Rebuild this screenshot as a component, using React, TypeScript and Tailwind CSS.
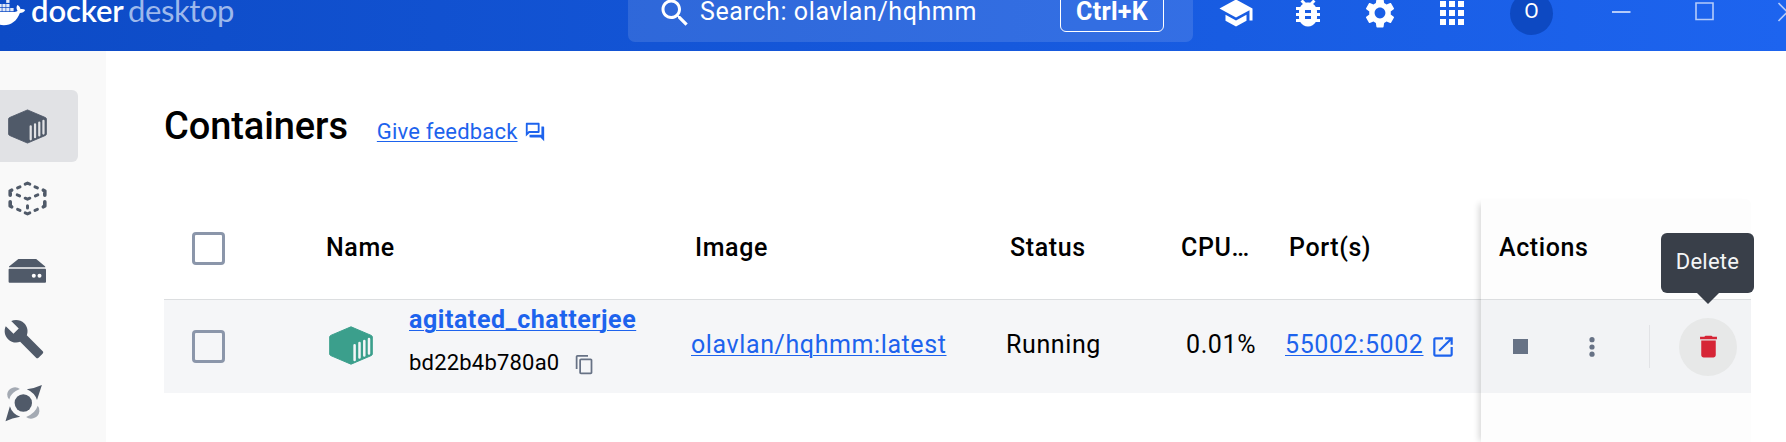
import type { ReactNode } from "react";

type IconProps = { className?: string };

function MdIcon({ d, className }: IconProps & { d: string }) {
  return (
    <svg viewBox="0 0 24 24" fill="currentColor" className={className}>
      <path d={d} />
    </svg>
  );
}

const paths = {
  search:
    "M15.5 14h-.79l-.28-.27C15.41 12.59 16 11.11 16 9.5 16 5.91 13.09 3 9.5 3S3 5.91 3 9.5 5.91 16 9.5 16c1.61 0 3.09-.59 4.23-1.57l.27.28v.79l5 4.99L20.49 19l-4.99-5zm-6 0C7.01 14 5 11.99 5 9.5S7.01 5 9.5 5 14 7.01 14 9.5 11.99 14 9.5 14z",
  school: "M5 13.18v4L12 21l7-3.82v-4L12 17l-7-3.82zM12 3 1 9l11 6 9-4.91V17h2V9L12 3z",
  bug: "M20 8h-2.81c-.45-.78-1.07-1.45-1.82-1.96L17 4.41 15.59 3l-2.17 2.17C12.96 5.06 12.49 5 12 5c-.49 0-.96.06-1.41.17L8.41 3 7 4.41l1.62 1.63C7.88 6.55 7.26 7.22 6.81 8H4v2h2.09c-.05.33-.09.66-.09 1v1H4v2h2v1c0 .34.04.67.09 1H4v2h2.81c1.04 1.79 2.97 3 5.19 3s4.15-1.21 5.19-3H20v-2h-2.09c.05-.33.09-.66.09-1v-1h2v-2h-2v-1c0-.34-.04-.67-.09-1H20V8zm-6 8h-4v-2h4v2zm0-4h-4v-2h4v2z",
  gear: "M19.14 12.94c.04-.3.06-.61.06-.94 0-.32-.02-.64-.07-.94l2.03-1.58c.18-.14.23-.41.12-.61l-1.92-3.32c-.12-.22-.37-.29-.59-.22l-2.39.96c-.5-.38-1.03-.7-1.62-.94l-.36-2.54c-.04-.24-.24-.41-.48-.41h-3.84c-.24 0-.43.17-.47.41l-.36 2.54c-.59.24-1.13.57-1.62.94l-2.39-.96c-.22-.08-.47 0-.59.22L2.74 8.87c-.12.21-.08.47.12.61l2.03 1.58c-.05.3-.09.63-.09.94s.02.64.07.94l-2.03 1.58c-.18.14-.23.41-.12.61l1.92 3.32c.12.22.37.29.59.22l2.39-.96c.5.38 1.03.7 1.62.94l.36 2.54c.05.24.24.41.48.41h3.84c.24 0 .44-.17.47-.41l.36-2.54c.59-.24 1.13-.56 1.62-.94l2.39.96c.22.08.47 0 .59-.22l1.92-3.32c.12-.22.07-.47-.12-.61l-2.01-1.58zM12 15.6c-1.98 0-3.6-1.62-3.6-3.6s1.62-3.6 3.6-3.6 3.6 1.62 3.6 3.6-1.62 3.6-3.6 3.6z",
  apps: "M4 8h4V4H4v4zm6 12h4v-4h-4v4zm-6 0h4v-4H4v4zm0-6h4v-4H4v4zm6 0h4v-4h-4v4zm6-10v4h4V4h-4zm-6 4h4V4h-4v4zm6 6h4v-4h-4v4zm0 6h4v-4h-4v4z",
  feedback:
    "M15 4v7H5.17l-.59.59-.58.58V4h11m1-2H3c-.55 0-1 .45-1 1v14l4-4h10c.55 0 1-.45 1-1V3c0-.55-.45-1-1-1zm5 4h-2v9H6v2c0 .55.45 1 1 1h11l4 4V7c0-.55-.45-1-1-1z",
  copy: "M16 1H4c-1.1 0-2 .9-2 2v14h2V3h12V1zm3 4H8c-1.1 0-2 .9-2 2v14c0 1.1.9 2 2 2h11c1.1 0 2-.9 2-2V7c0-1.1-.9-2-2-2zm0 16H8V7h11v14z",
  open: "M19 19H5V5h7V3H5c-1.11 0-2 .9-2 2v14c0 1.1.89 2 2 2h14c1.1 0 2-.9 2-2v-7h-2v7zM14 3v2h3.59l-9.83 9.83 1.41 1.41L19 6.41V10h2V3h-7z",
  trash: "M6 19c0 1.1.9 2 2 2h8c1.1 0 2-.9 2-2V7H6v12zM19 4h-3.5l-1-1h-5l-1 1H5v2h14V4z",
  wrench:
    "m22.7 19-9.1-9.1c.9-2.3.4-5-1.5-6.9-2-2-5-2.4-7.4-1.3L9 6 6 9 1.6 4.7C.4 7.1.9 10.1 2.9 12.1c1.9 1.9 4.6 2.4 6.9 1.5l9.1 9.1c.4.4 1 .4 1.4 0l2.3-2.3c.5-.4.5-1.1.1-1.4z",
};

function Whale() {
  return (
    <svg viewBox="0 0 26 38" className="h-[38px] w-[26px] shrink-0" fill="#fff">
      <path d="M0 17.9H14.6C16 17.9 17 17.5 17.5 16.800C16.200 15 16.300 12.700 17.400 11C19.200 12 20.300 13.500 20.500 15.200C22.200 14.900 24 15.200 25.200 16C24.300 18 22.400 18.900 19.900 19C16.900 27 11.200 31.200 3.800 31.200C2.200 31.200 1 31 0 30.700Z" />
      <g fillOpacity=".88">
        <path d="M6.200 5H9.500V8.900H6.200Z" />
        <path d="M0 9.900H1.700V13.200H0ZM2.400 9.900H5.600V13.200H2.400ZM6.200 9.900H9.500V13.200H6.200Z" />
        <path d="M0 13.900H1.700V17.200H0ZM2.400 13.900H5.600V17.200H2.400ZM6.200 13.900H9.500V17.200H6.200ZM10.200 13.900H13.600V17.200H10.200Z" />
      </g>
    </svg>
  );
}

function ContainerIcon({ className, stripe }: IconProps & { stripe: string }) {
  return (
    <svg viewBox="0 0 44 39" className={className}>
      <path
        d="M22 .8 42.2 9.4Q43.3 9.9 43.3 11V28Q43.3 29.1 42.2 29.6L22 38.2 1.8 29.6Q.7 29.1 .7 28V11Q.7 9.9 1.8 9.4Z"
        fill="currentColor"
        stroke="currentColor"
        strokeLinejoin="round"
      />
      <path
        d="M25.6 19.2V34M30.5 17V31.6M35.3 15V29.6M40 13V27.5"
        stroke={stripe}
        strokeWidth="2.5"
        strokeLinecap="round"
      />
    </svg>
  );
}

function ImagesIcon() {
  return (
    <svg
      viewBox="0 0 39 35"
      className="h-[35px] w-[39px]"
      fill="none"
      stroke="currentColor"
      strokeWidth="3"
      strokeLinecap="round"
      strokeLinejoin="round"
    >
      <path
        strokeWidth="3.6"
        d="M2.2 10V14.2M2.2 10 3.6 9.2M36.8 10V14.2M36.8 10 35.4 9.2M2.2 20.8V25L3.6 25.8M36.8 20.8V25L35.4 25.8"
      />
      <path d="M17.2 3.1 19.5 2.1 21.8 3.1M17.2 31.9 19.5 32.9 21.8 31.9M17.2 17.2 19.5 18.2 21.8 17.2" />
      <path d="M9.6 6.9 12 5.8M29.4 6.9 27 5.8M9.6 28.4 12 29.4M29.4 28.4 27 29.4M9.2 13.9 11.6 14.9M29.8 13.9 27.4 14.9M19.5 24.8V27" />
    </svg>
  );
}

function VolumesIcon() {
  return (
    <svg viewBox="0 0 39 26" className="h-[26px] w-[39px]" fill="currentColor">
      <path d="M10.4 1H28.2L37.2 8.4V9.3H1V8.4Z" />
      <path d="M1.5 10.8H37.1Q38 10.8 38 11.7V23.8Q38 24.8 37 24.8H1.6Q.6 24.8 .6 23.8V11.7Q.6 10.8 1.5 10.8Z" />
      <circle cx="25.8" cy="17.8" r="2" fill="#fff" />
      <circle cx="31.5" cy="17.8" r="2" fill="#fff" />
    </svg>
  );
}

function ScoutIcon() {
  return (
    <svg viewBox="0 0 38 38" className="h-[38px] w-[38px]" fill="currentColor">
      <path
        fill="#a4aab3"
        d="M14.9 5.1Q11.4 2.2 7 3.9Q2.6 5.8 2.2 10.3Q2 13 4.2 15.5Q5.6 8.6 14.9 5.1ZM21.1 32.9Q24.6 35.8 29 34.1Q33.8 32.2 34.4 27.2Q34.5 23.6 32.7 21.8Q30.4 29.4 21.1 32.9Z"
      />
      <path d="M36.9 1 32 16.1Q30 8.8 21.8 5.2Q30.6 4 36.9 1ZM.5 37.2 4.9 22.2Q7 29.6 15.2 32.8Q7 34.2 .5 37.2Z" />
      <circle cx="18.3" cy="19" r="8.7" />
    </svg>
  );
}

function NavItem({ children, active = false }: { children: ReactNode; active?: boolean }) {
  return (
    <div
      className={
        active
          ? "flex h-[72px] w-[78px] items-center rounded-r-[6px] bg-[#e1e2e5]"
          : "flex h-[72px] w-[78px] items-center"
      }
    >
      {children}
    </div>
  );
}

function Checkbox() {
  return <div className="h-[33px] w-[33px] rounded-[4px] border-[3.5px] border-[#8b96aa]" />;
}

function Header() {
  return (
    <header className="h-[51px] shrink-0 overflow-hidden bg-linear-to-r from-[#0d4bc6] to-[#1d64ef] text-white">
      <div className="flex h-[26px] items-center">
        <div className="flex w-[628px] shrink-0 items-center">
          <Whale />
          <div className="mt-[-7px] ml-[5px] flex items-baseline font-['Lato'] text-[31px] leading-[40px]">
            <span className="w-[97px] font-semibold tracking-[-0.1px]">docker</span>
            <span className="tracking-[-0.4px] text-[#9db8ec]">desktop</span>
          </div>
        </div>
        <div className="flex h-[58px] w-[565px] shrink-0 items-center rounded-[7px] bg-white/12 pl-7">
          <MdIcon d={paths.search} className="ml-px h-9 w-9" />
          <span className="mt-[-2px] ml-[7px] w-[360px] text-[25px] leading-7 tracking-[0.6px]">
            Search: olavlan/hqhmm
          </span>
          <span className="flex h-[38px] w-[104px] items-center justify-center rounded-[6px] border border-white pb-[2px] text-[25px] font-bold tracking-[0.3px]">
            Ctrl+K
          </span>
        </div>
        <div className="ml-[25px] flex w-[270px] shrink-0 items-center gap-9">
          <MdIcon d={paths.school} className="h-9 w-9" />
          <MdIcon d={paths.bug} className="h-9 w-9" />
          <MdIcon d={paths.gear} className="h-9 w-9" />
          <MdIcon d={paths.apps} className="h-9 w-9" />
        </div>
        <div className="ml-[22px] flex h-[43px] w-[43px] shrink-0 items-center justify-center rounded-full bg-[#0d49c2] pb-[3px] text-[21px]">
          O
        </div>
        <svg
          viewBox="0 0 176 26"
          className="ml-[57px] h-[26px] w-[176px] shrink-0"
          fill="none"
          stroke="#b4cbfa"
          strokeWidth="1.6"
        >
          <path d="M2 12H20.5" strokeWidth="2" />
          <path d="M86 3H103V19.5H86Z" />
          <path d="M168.5 3 186 21M168.5 21 186 3" />
        </svg>
      </div>
    </header>
  );
}

function Sidebar() {
  return (
    <nav className="w-[106px] shrink-0 bg-[#f9f9f9] pt-[39px] text-[#505a69]">
      <NavItem active>
        <ContainerIcon className="ml-[8px] h-[35px] w-[39px]" stripe="#e1e2e5" />
      </NavItem>
      <NavItem>
        <div className="ml-[8px]">
          <ImagesIcon />
        </div>
      </NavItem>
      <NavItem>
        <div className="mt-[2px] ml-[7.5px]">
          <VolumesIcon />
        </div>
      </NavItem>
      <NavItem>
        <MdIcon d={paths.wrench} className="mt-[-7px] ml-[3px] h-[42px] w-[42px]" />
      </NavItem>
      <NavItem>
        <div className="mt-[-22px] ml-[5px]">
          <ScoutIcon />
        </div>
      </NavItem>
    </nav>
  );
}

function ContainerTable() {
  return (
    <section className="flex h-[243px] w-[1587px] text-[25px] tracking-[0.6px]">
      <div className="w-[1317px]">
        <div className="grid h-[101px] grid-cols-[162px_369px_315px_171px_108px_192px] items-center border-b border-[#dcdee0] pb-[2px] font-medium">
          <div className="pl-7">
            <Checkbox />
          </div>
          <div>Name</div>
          <div>Image</div>
          <div>Status</div>
          <div>CPU…</div>
          <div>Port(s)</div>
        </div>
        <div className="grid h-[93px] grid-cols-[165px_80px_282px_315px_180px_99px_196px] items-center bg-[#f5f6f8]">
          <div className="pl-7">
            <Checkbox />
          </div>
          <ContainerIcon className="mt-[-2px] h-[39px] w-[44px] text-[#3b9f8c]" stripe="#f5f6f8" />
          <div className="mt-[-12px]">
            <a className="block leading-[44px] font-bold tracking-[0.55px] text-[#1d63ed] underline decoration-1 underline-offset-2">
              agitated_chatterjee
            </a>
            <div className="flex items-center text-[22px] leading-[42px] tracking-[0.2px]">
              bd22b4b780a0
              <MdIcon d={paths.copy} className="mt-[3px] ml-[15px] h-[21px] w-[21px] text-[#677285]" />
            </div>
          </div>
          <a className="mt-[-3px] text-[#1d63ed] underline decoration-1 underline-offset-2">olavlan/hqhmm:latest</a>
          <div className="mt-[-3px]">Running</div>
          <div className="mt-[-3px]">0.01%</div>
          <div className="mt-[-3px] flex items-center text-[#1d63ed]">
            <a className="underline decoration-1 underline-offset-2">55002:5002</a>
            <MdIcon d={paths.open} className="mt-[3px] ml-[6px] h-[26px] w-[26px]" />
          </div>
        </div>
      </div>
      <div className="w-[270px] rounded-tr-[6px] bg-[#fdfdfd] shadow-[-5px_2px_6px_-3px_rgba(0,0,0,0.16)]">
        <div className="relative flex h-[101px] items-center border-b border-[#dcdee0] pb-[2px] pl-[18px] font-medium">
          Actions
          <div className="absolute top-[34px] left-[180px] flex h-[60px] w-[93px] items-center justify-center rounded-[6px] bg-[#393f49] pb-[4px] text-[22px] font-normal tracking-[0.25px] text-[#f4f5f6]">
            Delete
            <svg viewBox="0 0 22 11" className="absolute top-full left-[36px] h-[11px] w-[22px]" fill="#393f49">
              <path d="M0 0H22L11 11Z" />
            </svg>
          </div>
        </div>
        <div className="flex h-[93px] items-center bg-[#f2f3f5]">
          <div className="ml-8 h-[15px] w-[15px] bg-[#677285]" />
          <svg viewBox="0 0 6 20" className="ml-[61px] h-5 w-[6px]" fill="#677285">
            <circle cx="3" cy="2.7" r="2.6" />
            <circle cx="3" cy="10" r="2.6" />
            <circle cx="3" cy="17.2" r="2.6" />
          </svg>
          <div className="ml-[54px] h-[43px] w-px bg-[#e2e3e6]" />
          <div className="ml-[29px] flex h-[58px] w-[58px] items-center justify-center rounded-full bg-[#e7e8e8]">
            <MdIcon d={paths.trash} className="h-[29px] w-[29px] text-[#d62536]" />
          </div>
        </div>
      </div>
    </section>
  );
}

export default function App() {
  return (
    <div className="flex h-[442px] w-[1786px] flex-col overflow-hidden bg-white font-['Roboto',sans-serif] whitespace-nowrap text-black">
      <Header />
      <div className="flex h-[391px]">
        <Sidebar />
        <main className="w-[1680px] pl-[58px]">
          <div className="flex h-[148px] items-baseline pt-[50px]">
            <h1 className="text-[38px] leading-[50px] font-medium tracking-[-0.1px]">Containers</h1>
            <a className="ml-[29px] text-[22px] tracking-[0.2px] text-[#1d63ed] underline decoration-1 underline-offset-2">
              Give feedback
            </a>
            <MdIcon d={paths.feedback} className="ml-[6px] h-[22px] w-[22px] translate-y-1 text-[#1d63ed]" />
          </div>
          <ContainerTable />
        </main>
      </div>
    </div>
  );
}
